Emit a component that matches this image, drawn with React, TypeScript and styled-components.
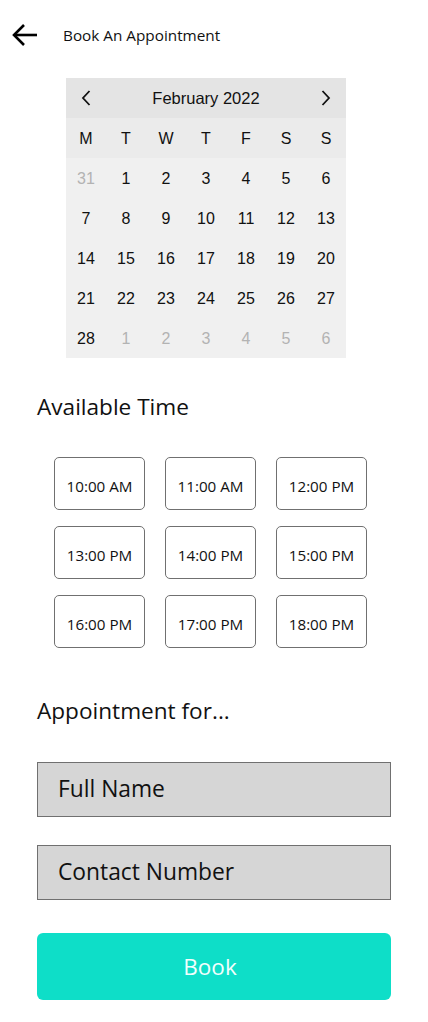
import React from "react";
import styled, { createGlobalStyle } from "styled-components";

const Global = createGlobalStyle`
  html, body { margin: 0; padding: 0; background: #ffffff; }
  body { font-family: "Open Sans", "Noto Sans", sans-serif; color: #111; }
  * { box-sizing: border-box; }
`;

const Page = styled.div`
  width: 428px;
  min-height: 1022px;
  display: flex;
  flex-direction: column;
`;

const Header = styled.header`
  height: 70px;
  display: flex;
  align-items: center;
  padding-left: 12px;
  gap: 25px;
`;

const BackButton = styled.button`
  border: none;
  background: none;
  padding: 0;
  width: 26px;
  height: 26px;
  display: flex;
  align-items: center;
  justify-content: center;
  cursor: pointer;
`;

const Title = styled.h1`
  margin: 0;
  font-size: 15.3px;
  font-weight: 400;
  color: #111;
`;

const Calendar = styled.div`
  margin-left: 66px;
  margin-top: 8px;
  width: 280px;
  font-family: "Liberation Sans", Arial, sans-serif;
`;

const CalHeader = styled.div`
  height: 40px;
  background: #e4e4e4;
  display: flex;
  align-items: center;
  justify-content: space-between;
  padding: 0 12px 0 12px;
  font-size: 16.5px;
  color: #111;
`;

const NavBtn = styled.button`
  border: none;
  background: none;
  padding: 0;
  width: 16px;
  height: 20px;
  display: flex;
  align-items: center;
  justify-content: center;
`;

const Grid = styled.div<{ $bg: string }>`
  display: grid;
  grid-template-columns: repeat(7, 40px);
  grid-auto-rows: 40px;
  background: ${(p) => p.$bg};
`;

const Cell = styled.div<{ $muted?: boolean }>`
  display: flex;
  align-items: center;
  justify-content: center;
  padding-top: 1px;
  font-size: 16px;
  color: ${(p) => (p.$muted ? "#b3b3b3" : "#111")};
`;

const SectionTitle = styled.h2<{ $top: number }>`
  margin: ${(p) => p.$top}px 0 0 37px;
  font-size: 22.6px;
  font-weight: 400;
  color: #111;
  line-height: 30px;
`;

const TimeGrid = styled.div`
  margin: 35px 0 0 54px;
  display: grid;
  grid-template-columns: repeat(3, 91px);
  column-gap: 20px;
  row-gap: 16px;
`;

const TimeSlot = styled.button`
  height: 53px;
  border: 1px solid #707070;
  border-radius: 5px;
  background: #fff;
  font-family: "Open Sans", "Noto Sans", sans-serif;
  font-size: 15.2px;
  color: #111;
  padding: 5px 0 0;
  cursor: pointer;
`;

const Form = styled.div`
  margin: 36px 0 0 37px;
  width: 354px;
  display: flex;
  flex-direction: column;
  gap: 28px;
`;

const Field = styled.input`
  height: 55px;
  width: 100%;
  background: #d6d6d6;
  border: 1px solid #707070;
  padding: 0 0 2px 20px;
  font-family: "Open Sans", "Noto Sans", sans-serif;
  font-size: 22.8px;
  color: #111;
  outline: none;
  &::placeholder { color: #111; opacity: 1; }
`;

const BookButton = styled.button`
  margin-top: 5px;
  height: 67px;
  width: 100%;
  border: none;
  border-radius: 6px;
  background: #0edec8;
  color: #f2fffd;
  font-family: "Open Sans", "Noto Sans", sans-serif;
  font-size: 22.5px;
  padding: 0 8px 0 0;
  cursor: pointer;
`;

const weekdays = ["M", "T", "W", "T", "F", "S", "S"];
const days: { d: number; muted?: boolean }[] = [
  { d: 31, muted: true },
  ...Array.from({ length: 28 }, (_, i) => ({ d: i + 1 })),
  ...Array.from({ length: 6 }, (_, i) => ({ d: i + 1, muted: true })),
];
const times = [
  "10:00 AM", "11:00 AM", "12:00 PM",
  "13:00 PM", "14:00 PM", "15:00 PM",
  "16:00 PM", "17:00 PM", "18:00 PM",
];

export default function App() {
  return (
    <Page>
      <Global />
      <Header>
        <BackButton aria-label="Back">
          <svg width="26" height="24" viewBox="0 0 26 24" fill="none" stroke="#000" strokeWidth="2.6" strokeLinecap="butt">
            <path d="M25 12H3" />
            <path d="M12 2L2 12l10 10" />
          </svg>
        </BackButton>
        <Title>Book An Appointment</Title>
      </Header>
      <Calendar>
        <CalHeader>
          <NavBtn aria-label="Previous">
            <svg width="10" height="16" viewBox="0 0 10 16" fill="none" stroke="#111" strokeWidth="1.8">
              <path d="M8.5 1L2 8l6.5 7" />
            </svg>
          </NavBtn>
          <span>February 2022</span>
          <NavBtn aria-label="Next">
            <svg width="10" height="16" viewBox="0 0 10 16" fill="none" stroke="#111" strokeWidth="1.8">
              <path d="M1.5 1L8 8l-6.5 7" />
            </svg>
          </NavBtn>
        </CalHeader>
        <Grid $bg="#ebebeb">
          {weekdays.map((w, i) => (
            <Cell key={i}>{w}</Cell>
          ))}
        </Grid>
        <Grid $bg="#f0f0f0">
          {days.map((c, i) => (
            <Cell key={i} $muted={c.muted}>{c.d}</Cell>
          ))}
        </Grid>
      </Calendar>
      <SectionTitle $top={34}>Available Time</SectionTitle>
      <TimeGrid>
        {times.map((t) => (
          <TimeSlot key={t}>{t}</TimeSlot>
        ))}
      </TimeGrid>
      <SectionTitle $top={48}>Appointment for...</SectionTitle>
      <Form>
        <Field placeholder="Full Name" />
        <Field placeholder="Contact Number" />
        <BookButton>Book</BookButton>
      </Form>
    </Page>
  );
}
